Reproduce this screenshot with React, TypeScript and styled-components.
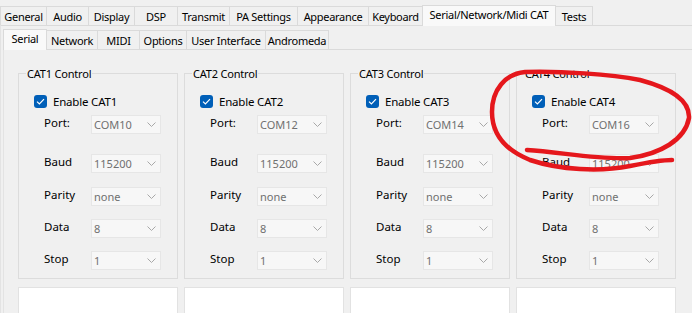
//  Setup dialog - Serial/Network/Midi CAT page
import styled, { createGlobalStyle } from "styled-components";

const GlobalStyle = createGlobalStyle`
    html, body {
        margin: 0;
        padding: 0;
        background: #f0f0f0;
    }
    body {
        font-family: "Noto Sans", "Liberation Sans", sans-serif;
        font-size: 11px;
        color: #000;
    }
`;

const Window = styled.div`
    position: relative;
    width: 692px;
    height: 313px;
    overflow: hidden;
    background: #f0f0f0;
`;

const TabStrip = styled.div<{ $height: number; $indent: number }>`
    display: flex;
    align-items: flex-end;
    height: ${(p) => p.$height}px;
    padding-left: ${(p) => p.$indent}px;
    position: relative;
    z-index: 1;
`;

const Tab = styled.div<{ $w: number; $active?: boolean }>`
    box-sizing: border-box;
    width: ${(p) => p.$w}px;
    height: ${(p) => (p.$active ? 21 : 19)}px;
    margin-bottom: ${(p) => (p.$active ? -1 : 0)}px;
    padding-bottom: ${(p) => (p.$active ? 3 : 0)}px;
    display: flex;
    align-items: center;
    justify-content: center;
    white-space: nowrap;
    letter-spacing: -0.3px;
    background: ${(p) => (p.$active ? "#f9f9f9" : "#f0f0f0")};
    border: 1px solid #dadada;
    border-bottom: none;
    margin-right: -1px;
`;

const OuterPage = styled.div`
    border-top: 1px solid #dadada;
    border-left: 1px solid #e3e3e3;
    height: 300px;
`;

const InnerPage = styled.div`
    margin-left: 2px;
    border-top: 1px solid #dadada;
    border-left: 1px solid #e3e3e3;
    height: 280px;
`;

const Columns = styled.div`
    display: flex;
    gap: 6px;
    padding: 16px 0 0 14px;
`;

const Column = styled.div`
    display: flex;
    flex-direction: column;
    width: 160px;
`;

const Group = styled.fieldset`
    box-sizing: border-box;
    width: 160px;
    margin: 0;
    padding: 13px 0 8px 15px;
    border: 1px solid #dcdcdc;
    min-width: 0;
`;

const Legend = styled.legend`
    margin-left: -8px;
    padding: 0 1px;
    line-height: 15px;
    font-size: 11px;
    letter-spacing: -0.2px;
`;

const CheckRow = styled.label`
    display: flex;
    align-items: center;
    gap: 6px;
    height: 15px;
    font-size: 11.5px;
    letter-spacing: -0.2px;
`;

const CheckBox = styled.span`
    width: 13px;
    height: 13px;
    border-radius: 3px;
    background: #005fb8;
    display: flex;
    align-items: center;
    justify-content: center;
`;

const Field = styled.div<{ $top: number }>`
    display: flex;
    align-items: flex-start;
    margin-top: ${(p) => p.$top}px;
    padding-left: 10px;
`;

const FieldLabel = styled.span`
    width: 47px;
    line-height: 15px;
    font-size: 11.5px;
`;

const Combo = styled.div`
    box-sizing: border-box;
    width: 70px;
    height: 19px;
    background: #f7f7f7;
    border: 1px solid #e6e6e6;
    display: flex;
    align-items: center;
    justify-content: space-between;
    padding: 0 4px 0 2px;
    color: #707070;
    font-size: 11px;
`;

const WhiteBox = styled.div`
    margin-top: 8px;
    height: 40px;
    background: #ffffff;
    border: 1px solid #e2e2e2;
    box-sizing: border-box;
`;

const Scribble = styled.svg`
    position: absolute;
    left: 0;
    top: 0;
    pointer-events: none;
    z-index: 5;
`;

const outerTabs = [
    { name: "General", w: 47 },
    { name: "Audio", w: 43 },
    { name: "Display", w: 47 },
    { name: "DSP", w: 44 },
    { name: "Transmit", w: 53 },
    { name: "PA Settings", w: 69 },
    { name: "Appearance", w: 72 },
    { name: "Keyboard", w: 55 },
    { name: "Serial/Network/Midi CAT", w: 134, active: true },
    { name: "Tests", w: 38 },
];

const innerTabs = [
    { name: "Serial", w: 44, active: true },
    { name: "Network", w: 52 },
    { name: "MIDI", w: 43 },
    { name: "Options", w: 48 },
    { name: "User Interface", w: 80 },
    { name: "Andromeda", w: 64 },
];

const cats = [
    { id: 1, port: "COM10" },
    { id: 2, port: "COM12" },
    { id: 3, port: "COM14" },
    { id: 4, port: "COM16" },
];

function Chevron() {
    return (
        <svg width="9" height="5" viewBox="0 0 9 5">
            <path d="M0.5 0.5 L4.5 4.5 L8.5 0.5" fill="none" stroke="#a8a8a8" strokeWidth="1" />
        </svg>
    );
}

function CatGroup({ id, port }: { id: number; port: string }) {
    const fields = [
        { label: "Port:", value: port, top: 6 },
        { label: "Baud", value: "115200", top: 20 },
        { label: "Parity", value: "none", top: 14 },
        { label: "Data", value: "8", top: 13 },
        { label: "Stop", value: "1", top: 13 },
    ];
    return (
        <Group>
            <Legend>CAT{id} Control</Legend>
            <CheckRow>
                <CheckBox>
                    <svg width="9" height="7" viewBox="0 0 9 7">
                        <path d="M1 3.6 L3.4 6 L8 1.2" fill="none" stroke="#fff" strokeWidth="1.2" />
                    </svg>
                </CheckBox>
                Enable CAT{id}
            </CheckRow>
            {fields.map((f) => (
                <Field key={f.label} $top={f.top}>
                    <FieldLabel>{f.label}</FieldLabel>
                    <Combo>
                        {f.value}
                        <Chevron />
                    </Combo>
                </Field>
            ))}
        </Group>
    );
}

function App() {
    return (
        <Window>
            <GlobalStyle />
            <TabStrip $height={25} $indent={0}>
                {outerTabs.map((t) => (
                    <Tab key={t.name} $w={t.w} $active={t.active}>{t.name}</Tab>
                ))}
            </TabStrip>
            <OuterPage>
                <TabStrip $height={23} $indent={2}>
                    {innerTabs.map((t) => (
                        <Tab key={t.name} $w={t.w} $active={t.active}>{t.name}</Tab>
                    ))}
                </TabStrip>
                <InnerPage>
                    <Columns>
                        {cats.map((c) => (
                            <Column key={c.id}>
                                <CatGroup id={c.id} port={c.port} />
                                <WhiteBox />
                            </Column>
                        ))}
                    </Columns>
                </InnerPage>
            </OuterPage>
            <Scribble width="692" height="313">
                <path
                    d="M527 150 C560 152 600 160 630 158 C660 154 685 140 689 118 C690 100 670 88 640 80 C610 74 560 71 525 72 C505 74 492 90 492 112 C492 135 505 150 530 160 C560 170 600 172 630 166 C650 162 665 160 672 160"
                    fill="none"
                    stroke="#e5171c"
                    strokeWidth="4.5"
                    strokeLinecap="round"
                    strokeLinejoin="round"
                />
            </Scribble>
        </Window>
    );
}

export default App;
